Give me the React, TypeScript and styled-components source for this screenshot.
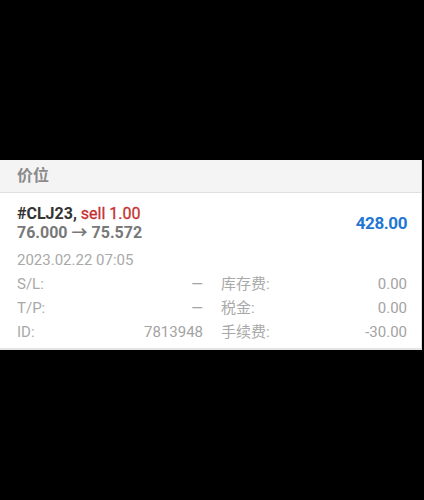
import React from 'react';
import styled, {createGlobalStyle} from 'styled-components';

const GlobalStyle = createGlobalStyle`
  html, body {
    margin: 0;
    padding: 0;
    background: #000;
  }
  body {
    width: 424px;
    height: 500px;
    overflow: hidden;
    font-family: Roboto, 'Noto Sans CJK SC', sans-serif;
  }
`

interface Trade {
  symbol: string
  side: string
  volume: string
  openPrice: string
  closePrice: string
  profit: string
  time: string
  sl: string
  tp: string
  id: string
  swap: string
  taxes: string
  commission: string
}

const trade: Trade = {
  symbol: '#CLJ23',
  side: 'sell',
  volume: '1.00',
  openPrice: '76.000',
  closePrice: '75.572',
  profit: '428.00',
  time: '2023.02.22 07:05',
  sl: '—',
  tp: '—',
  id: '7813948',
  swap: '0.00',
  taxes: '0.00',
  commission: '-30.00',
}

const PanelStyled = styled.section`
  margin-top: 160px;
  width: 422px;
  box-sizing: border-box;
  background: #fff;
  border-right: 1px solid #dcdcdc;
  border-bottom: 2px solid #e4e4e4;
`

const SectionHeaderStyled = styled.div`
  height: 32px;
  line-height: 32px;
  padding-left: 17px;
  background: #f4f4f4;
  border-bottom: 1px solid #e0e0e0;
  color: #8b8b8b;
  font-size: 16px;
  font-weight: 700;
`

const BodyStyled = styled.div`
  padding: 11px 14px 4px 17px;
`

const TradeTopStyled = styled.div`
  display: flex;
  align-items: center;
  justify-content: space-between;
`

const TitleBlockStyled = styled.div`
  font-size: 16px;
  font-weight: 700;
  line-height: 19px;
`

const SymbolStyled = styled.span`
  color: #333;
`

const SideStyled = styled.span`
  color: #c4302f;
  font-weight: 400;
  -webkit-text-stroke: 0.3px #c4302f;
`

const PricesStyled = styled.div`
  color: #787878;
`

const ProfitStyled = styled.div`
  color: #1f77d4;
  font-size: 17px;
  font-weight: 700;
  letter-spacing: -0.4px;
`

const TimeStyled = styled.div`
  margin-top: 6px;
  color: #a9a9a9;
  font-size: 15px;
  line-height: 24px;
`

const DetailsGridStyled = styled.div`
  display: grid;
  grid-template-columns: 1fr 1fr;
  column-gap: 18px;
`

const DetailRowStyled = styled.div`
  display: flex;
  justify-content: space-between;
  height: 24px;
  line-height: 24px;
  font-size: 15px;
  color: #a9a9a9;
`

const DetailValueStyled = styled.span`
  color: #a3a3a3;
`

const Detail = ({label, value}: {label: string, value: string}) => (
  <DetailRowStyled>
    <span>{label}</span>
    <DetailValueStyled>{value}</DetailValueStyled>
  </DetailRowStyled>
)

function App() {
  return (
    <>
      <GlobalStyle/>
      <PanelStyled>
        <SectionHeaderStyled>价位</SectionHeaderStyled>
        <BodyStyled>
          <TradeTopStyled>
            <TitleBlockStyled>
              <div>
                <SymbolStyled>{trade.symbol}, </SymbolStyled>
                <SideStyled>{trade.side} {trade.volume}</SideStyled>
              </div>
              <PricesStyled>{trade.openPrice} → {trade.closePrice}</PricesStyled>
            </TitleBlockStyled>
            <ProfitStyled>{trade.profit}</ProfitStyled>
          </TradeTopStyled>
          <TimeStyled>{trade.time}</TimeStyled>
          <DetailsGridStyled>
            <Detail label="S/L:" value={trade.sl}/>
            <Detail label="库存费:" value={trade.swap}/>
            <Detail label="T/P:" value={trade.tp}/>
            <Detail label="税金:" value={trade.taxes}/>
            <Detail label="ID:" value={trade.id}/>
            <Detail label="手续费:" value={trade.commission}/>
          </DetailsGridStyled>
        </BodyStyled>
      </PanelStyled>
    </>
  );
}

export default App;
